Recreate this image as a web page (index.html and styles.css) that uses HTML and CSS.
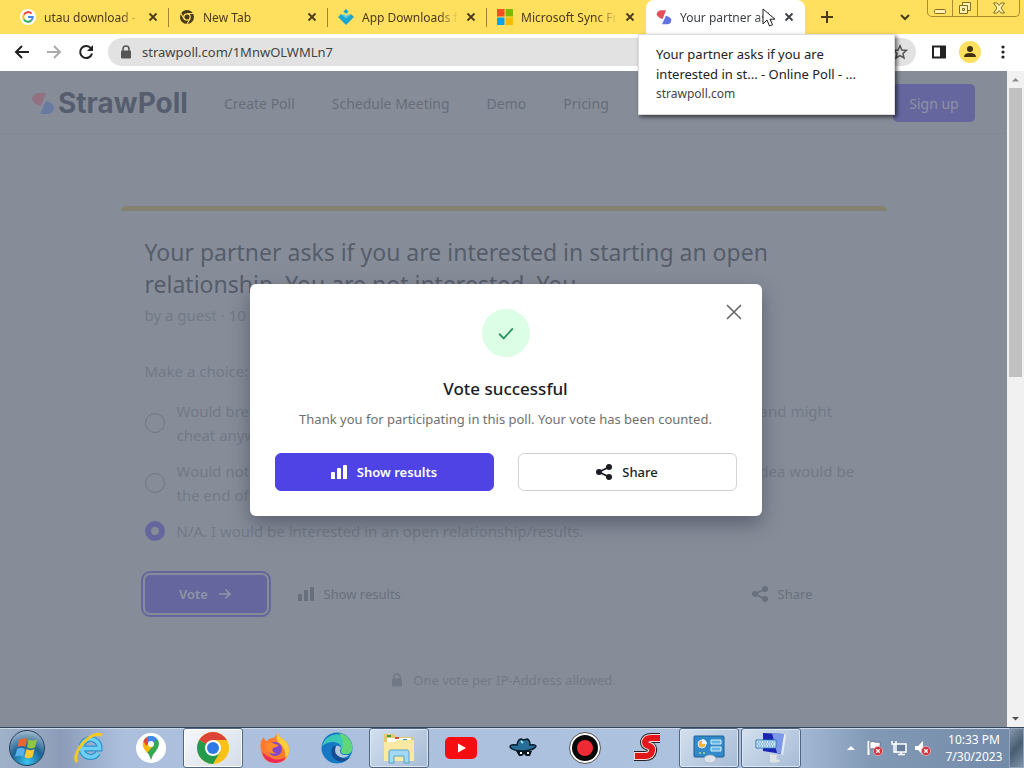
FILE: index.html
```
<!DOCTYPE html>
<html lang="en">
<head>
    <meta charset="UTF-8">
    <meta name="viewport" content="width=device-width, initial-scale=1.0">
    <title>Your partner asks if you are interested in st... - Online Poll - StrawPoll</title>
    <link rel="stylesheet" href="styles.css">
</head>

<body>
    <!-- shared icons -->
    <svg class="sprite" aria-hidden="true">
        <symbol id="x" viewBox="0 0 10 10"><path d="M1.5 1.5l7 7M8.500 1.500l-7 7" stroke="currentColor" stroke-width="1.8"/></symbol>
        <symbol id="bars" viewBox="0 0 16 16"><path d="M0 9q0-1 1-1h2q1 0 1 1v6H0zM6 5q0-1 1-1h2q1 0 1 1v10H6zM12 2q0-1 1-1h2q1 0 1 1v13h-4z" fill="currentColor"/></symbol>
        <symbol id="share" viewBox="0 0 16 16"><path d="M13 3L3 8l10 5" fill="none" stroke="currentColor" stroke-width="1.8"/><circle cx="13" cy="3" r="3" fill="currentColor"/><circle cx="3" cy="8" r="3" fill="currentColor"/><circle cx="13" cy="13" r="3" fill="currentColor"/></symbol>
        <symbol id="lock" viewBox="0 0 12 14"><path d="M3 7V4a3 3 0 0 1 6 0v3" fill="none" stroke="currentColor" stroke-width="1.6"/><rect x="1" y="5.500" width="10" height="8" rx="1.200" fill="currentColor"/></symbol>
        <symbol id="straws" viewBox="0 0 24 24"><path class="straw-red" d="M1 8q1-5 6-6h8l-5 13Q2 13 1 8z"/><path class="straw-blue" d="M9 23l6-13q7 2 8 6 0 6-6 7z"/></symbol>
        <symbol id="error" viewBox="0 0 10 10"><circle cx="5" cy="5" r="4.600" fill="#d0343c" stroke="#efb4b6" stroke-width=".8"/><path d="M3.200 3.200l3.600 3.600M6.800 3.200L3.200 6.800" stroke="#fff" stroke-width="1.300"/></symbol>
    </svg>

    <div class="tab-strip">
        <div class="tab">
            <svg class="favicon" viewBox="0 0 16 16"><circle cx="8" cy="8" r="8" fill="#fff"/><g fill="none" stroke-width="2"><path d="M4 5.500A4.700 4.700 0 0 1 11.500 4.600" stroke="#ea4335"/><path d="M4 5.500a4.700 4.700 0 0 0 0 5" stroke="#fbbc05"/><path d="M4 10.500a4.700 4.700 0 0 0 7.200 1" stroke="#34a853"/><path d="M8 8h4.700q0 2.200-1.500 3.500" stroke="#4285f4"/></g></svg>
            <span class="tab-title">utau download - Google Search</span>
            <button class="tab-close" aria-label="Close tab"><svg><use href="#x"/></svg></button>
        </div>
        <div class="tab">
            <svg class="favicon" viewBox="0 0 16 16"><circle cx="8" cy="8" r="7" fill="#4a3a1c"/><circle cx="8" cy="8" r="3.200" fill="#4a3a1c" stroke="#ffdf5e" stroke-width="1.300"/><path d="M8 4.500h6.500M5 9.800L1.800 4.200M11 9.800l-3.200 5.400" stroke="#ffdf5e" stroke-width="1.100"/></svg>
            <span class="tab-title">New Tab</span>
            <button class="tab-close" aria-label="Close tab"><svg><use href="#x"/></svg></button>
        </div>
        <div class="tab">
            <svg class="favicon" viewBox="0 0 16 16"><path d="M0 8l3-3 5 4 5-4 3 3-8 8z" fill="#1ba6cf"/><path d="M8 0l2.500 2.500L8 5 5.500 2.500z" fill="#1ba6cf"/><path d="M4 6l4 3.500L12 6l-2-1-2 2-2-2z" fill="#5cc9e2"/></svg>
            <span class="tab-title">App Downloads for Windows</span>
            <button class="tab-close" aria-label="Close tab"><svg><use href="#x"/></svg></button>
        </div>
        <div class="tab">
            <svg class="favicon" viewBox="0 0 16 16"><path d="M0 0h7.500v7.500H0z" fill="#f25022"/><path d="M8.500 0H16v7.500H8.500z" fill="#7fba00"/><path d="M0 8.500h7.500V16H0z" fill="#00a4ef"/><path d="M8.500 8.500H16V16H8.500z" fill="#ffb900"/></svg>
            <span class="tab-title">Microsoft Sync Framework</span>
            <button class="tab-close" aria-label="Close tab"><svg><use href="#x"/></svg></button>
        </div>
        <div class="tab active">
            <svg class="favicon"><use href="#straws"/></svg>
            <span class="tab-title">Your partner asks if you</span>
            <button class="tab-close" aria-label="Close tab"><svg><use href="#x"/></svg></button>
            <svg class="cursor" viewBox="0 0 14 20"><path d="M1 1v15l4-4 2.500 6 3-1.200L8 11.200h5z" fill="#fff" stroke="#222"/></svg>
            <div class="tab-card">
                <p>Your partner asks if you are<br>interested in st... - Online Poll - ...</p>
                <p class="host">strawpoll.com</p>
            </div>
        </div>
        <button class="new-tab" aria-label="New tab"><svg viewBox="0 0 12 12"><path d="M6 0v12M0 6h12" stroke="currentColor" stroke-width="2"/></svg></button>
        <button class="tab-search" aria-label="Search tabs"><svg viewBox="0 0 12 12"><path d="M2 4l4 4 4-4" fill="none" stroke="currentColor" stroke-width="2"/></svg></button>
        <div class="window-buttons">
            <button aria-label="Minimize"><svg viewBox="0 0 14 14"><rect x="1.500" y="8.500" width="11" height="4" rx="1" fill="#fff1b0" stroke="#8a6d1c"/></svg></button>
            <button aria-label="Restore"><svg viewBox="0 0 14 14"><path d="M4.500 1.500h8v8h-8z" fill="#fff1b0" stroke="#8a6d1c"/><path d="M1.500 4.500h8v8h-8z" fill="#fff1b0" stroke="#8a6d1c"/><path d="M4.500 7.500h2v2h-2z" fill="none" stroke="#8a6d1c"/></svg></button>
            <button class="wide" aria-label="Close"><svg viewBox="0 0 14 14"><path d="M1.500 2h3.500l2 2.500L9 2h3.500L9 7l3.500 5H9L7 9.500 5 12H1.500L5 7z" fill="#fff1b0" stroke="#8a6d1c"/></svg></button>
        </div>
    </div>

    <div class="toolbar">
        <button aria-label="Back"><svg viewBox="0 0 16 16"><path d="M15 8H2M8 2L2 8l6 6" fill="none" stroke="currentColor" stroke-width="2"/></svg></button>
        <button class="off" aria-label="Forward"><svg viewBox="0 0 16 16"><path d="M1 8h13M8 2l6 6-6 6" fill="none" stroke="currentColor" stroke-width="2"/></svg></button>
        <button aria-label="Reload"><svg viewBox="0 0 16 16"><path d="M13 4.500A6 6 0 1 0 14 9.500" fill="none" stroke="currentColor" stroke-width="2"/><path d="M15 1v6H9z" fill="currentColor"/></svg></button>
        <div class="omnibox">
            <svg class="lock"><use href="#lock"/></svg>
            <input type="text" aria-label="Address" value="strawpoll.com/1MnwOLWMLn7">
            <svg class="star" viewBox="0 0 16 16"><path d="M8 1.800l1.900 4.200 4.500.4-3.400 3 1 4.500L8 11.500l-4 2.400 1-4.500-3.400-3 4.500-.4z" fill="none" stroke="currentColor" stroke-width="1.500"/></svg>
        </div>
        <button aria-label="Side panel"><svg viewBox="0 0 16 16"><path d="M2 2.500h12v11H2z" fill="none" stroke="currentColor" stroke-width="2"/><path d="M9 2h5v12H9z" fill="currentColor"/></svg></button>
        <button class="avatar" aria-label="Profile"><svg viewBox="0 0 16 16"><circle cx="8" cy="5" r="3" fill="currentColor"/><path d="M2 13q0-4 6-4t6 4z" fill="currentColor"/></svg></button>
        <button aria-label="Menu"><svg viewBox="0 0 16 16"><g fill="currentColor"><circle cx="8" cy="3" r="1.600"/><circle cx="8" cy="8" r="1.600"/><circle cx="8" cy="13" r="1.600"/></g></svg></button>
    </div>

    <div class="viewport">
        <div class="page">
            <header class="site-header">
                <a href="#" class="logo"><svg><use href="#straws"/></svg>StrawPoll</a>
                <nav>
                    <a href="#">Create Poll</a>
                    <a href="#">Schedule Meeting</a>
                    <a href="#">Demo</a>
                    <a href="#">Pricing</a>
                </nav>
                <button class="sign-up">Sign up</button>
            </header>

            <main class="poll">
                <h1>Your partner asks if you are interested in starting an open relationship. You are not interested. You</h1>
                <p class="byline">by a guest &middot; 10 months ago</p>
                <form>
                    <p class="hint">Make a choice:</p>
                    <label><input type="radio" name="choice"><span>Would break up with them since they are clearly not happy in our relationship now and might<br>cheat anyway.</span></label>
                    <label><input type="radio" name="choice"><span>Would not break up with them but I would warn them that I am not for it and that idea would be<br>the end of us.</span></label>
                    <label><input type="radio" name="choice" checked><span>N/A. I would be interested in an open relationship/results.</span></label>
                    <div class="poll-actions">
                        <button type="button" class="vote">Vote <svg viewBox="0 0 14 14"><path d="M1 7h11M7.500 2.500L12 7l-4.500 4.500" fill="none" stroke="currentColor" stroke-width="1.600"/></svg></button>
                        <button type="button" class="plain"><svg><use href="#bars"/></svg>Show results</button>
                        <button type="button" class="plain last"><svg><use href="#share"/></svg>Share</button>
                    </div>
                </form>
            </main>
            <p class="ip-note"><svg><use href="#lock"/></svg>One vote per IP-Address allowed.</p>

            <div class="modal-wrap">
                <div class="modal" role="dialog" aria-labelledby="modal-title">
                    <button class="modal-close" aria-label="Close"><svg viewBox="0 0 16 16"><path d="M1 1l14 14M15 1L1 15" stroke="currentColor" stroke-width="1.600"/></svg></button>
                    <div class="check"><svg viewBox="0 0 24 24"><path d="M4.500 12.800l5 5L19.500 7" fill="none" stroke="#2a9461" stroke-width="2"/></svg></div>
                    <h2 id="modal-title">Vote successful</h2>
                    <p>Thank you for participating in this poll. Your vote has been counted.</p>
                    <div class="modal-actions">
                        <button class="primary"><svg><use href="#bars"/></svg>Show results</button>
                        <button><svg><use href="#share"/></svg>Share</button>
                    </div>
                </div>
            </div>
        </div>
        <div class="scrollbar">
            <svg viewBox="0 0 17 17"><path d="M5 10.500h7L8.500 7z" fill="#8b8b8b"/></svg>
            <div class="thumb"></div>
            <svg viewBox="0 0 17 17"><path d="M5 7h7l-3.500 3.500z" fill="#505050"/></svg>
        </div>
    </div>

    <div class="taskbar">
        <button class="start" aria-label="Start">
            <svg viewBox="0 0 38 38"><defs><radialGradient id="orb" cx=".5" cy=".9" r=".9"><stop offset="0" stop-color="#38c5ee"/><stop offset=".5" stop-color="#1c6296"/><stop offset="1" stop-color="#a7bccd"/></radialGradient></defs><circle cx="19" cy="19" r="17.500" fill="url(#orb)" stroke="#263f5a"/><path d="M11 11q4-3 8-1l-1.500 8q-4-2-8 0z" fill="#ee6430"/><path d="M20.500 10.500q4 2 8.500 0l-2 8q-4 2-8 0z" fill="#93c540"/><path d="M9 20q4-2.500 8 0l-2 8q-3.500-2.500-8 0z" fill="#58b0ea"/><path d="M18.500 20q4 2.500 8 0l-2 8q-4 2.500-8 0z" fill="#fbca36"/></svg>
        </button>
        <button class="task" aria-label="Internet Explorer">
            <svg viewBox="0 0 32 32"><path d="M25 21a9 9 0 1 1 1.500-4.500H9.500" fill="none" stroke="#2c94cf" stroke-width="6"/><path d="M25 21a9 9 0 1 1 1.500-4.500H9.500" fill="none" stroke="#6ed0f4" stroke-width="3.600"/><path d="M4 30C-2 22 16-2 29 3" fill="none" stroke="#f2c928" stroke-width="3"/></svg>
        </button>
        <button class="task" aria-label="Maps">
            <svg viewBox="0 0 32 32"><circle cx="16" cy="16" r="15" fill="#fff"/><path d="M16 28q-1-5-5-9-3-4-3-7a8 8 0 0 1 16 0q0 3-3 7-4 4-5 9z" fill="#34a853"/><path d="M10 18q-3-4-2-8l5-1 5 5-6 7z" fill="#fbbc04"/><path d="M8.500 9A8 8 0 0 1 13 4.600L15 10l-4 4z" fill="#ea4335"/><path d="M12 5a8 8 0 0 1 10 2l-6 7-4-3z" fill="#4285f4"/><circle cx="16" cy="12" r="3" fill="#fff"/></svg>
        </button>
        <button class="task open front" aria-label="Chrome">
            <svg viewBox="0 0 32 32"><circle cx="16" cy="16" r="16" fill="#fbc116"/><path d="M16 16L2.200 8A16 16 0 0 1 29.800 8z" fill="#dc4437"/><path d="M2.200 8A16 16 0 0 0 16 32l7-12-7-4z" fill="#249a4c"/><path d="M16 8h13.800L23 20z" fill="#fbc116"/><circle cx="16" cy="16" r="8" fill="#fff"/><circle cx="16" cy="16" r="6" fill="#2f78e6"/></svg>
        </button>
        <button class="task" aria-label="Firefox">
            <svg viewBox="0 0 32 32"><path d="M2 18Q0 9 5 5q0 3 3 4 2-3 6-3 3-1 5-5 1 4 5 6 7 5 6 13-2 11-14 11T2 18z" fill="#fd7a2e"/><path d="M19 1q1 4 5 6 7 5 6 13-1 5-4 8 2-12-7-18-3-4 0-9z" fill="#ffcf3a"/><path d="M3 20q3 11 13 11 8 0 12-7-6 5-13 3T3 20z" fill="#ee295c"/><circle cx="16" cy="17" r="7" fill="#8247cf"/><path d="M7 12q4-3 9 0l4 1q-3 3-6 3-2 4 3 5-7 2-9-4z" fill="#ff8a2a"/></svg>
        </button>
        <button class="task" aria-label="Edge">
            <svg viewBox="0 0 32 32"><circle cx="16" cy="16" r="15.500" fill="#1678c5"/><path d="M1 14A15.500 15.500 0 0 1 31.500 17q-1 6-7 5-6 0-4-5 0-6-8-7-7 0-11 4z" fill="#3bc7b8"/><path d="M18 1q11 2 13.500 13 0 9-8 8-5-1-3-4 4-9-2.500-17z" fill="#62d777"/><path d="M12 14q-5 10 5 15 7 2 12-4-5 3-9 0-8-3-5-11z" fill="#144d91"/><path d="M15 14q-3 8 4 11 5 2 9-2-12 1-8-7-2-3-5-2z" fill="#b4c8e0"/></svg>
        </button>
        <button class="task open" aria-label="Explorer">
            <svg viewBox="0 0 32 32"><path d="M1 2h10l2 3h17v24H1z" fill="#e5c96a"/><path d="M4 6h24v6H4z" fill="#fff"/><path d="M4 3h4v2H4z" fill="#3c9a54"/><path d="M12 5h4v2h-4z" fill="#d05237"/><path d="M20 7h4v2h-4z" fill="#3285c9"/><path d="M1 10h11l2-2h17v21H1z" fill="#f9e9a2"/><path d="M6 31V20q0-2 2-2h16q2 0 2 2v11h-5v-7H11v7z" fill="#a3d9f2" stroke="#53a3cc"/></svg>
        </button>
        <button class="task" aria-label="YouTube">
            <svg viewBox="0 0 32 32"><rect y="5" width="32" height="22" rx="5" fill="#f60d12"/><path d="M13 11.500l8 4.500-8 4.500z" fill="#fff"/></svg>
        </button>
        <button class="task" aria-label="Incognito">
            <svg viewBox="0 0 32 32"><path d="M10 13q1-6 4-6l3 1 3-1q3 1 3 6 5-1 6 1-1 4-12 5-12 0-14-4 0-3 7-2z" fill="#256e97" stroke="#0a1c29" stroke-width="1.500"/><path d="M9 19h16l-2 5h-4l-2-2-2 2h-3z" fill="#0b1720"/><path d="M13 20h2v2h-2zM20 20h2v2h-2z" fill="#fff"/><path d="M14 9l2 2" stroke="#9ddcf2" stroke-width="2"/></svg>
        </button>
        <button class="task" aria-label="Recorder">
            <svg viewBox="0 0 32 32"><circle cx="16" cy="16" r="15.500" fill="#fff" stroke="#555"/><circle cx="16" cy="16" r="13" fill="#070707"/><circle cx="16" cy="16" r="8" fill="#ee2b35"/></svg>
        </button>
        <button class="task" aria-label="S">
            <svg viewBox="0 0 32 32"><g fill="none" stroke-linejoin="round"><path d="M29 6H20q-5 0-6 4 0 3 4 4 4 1 3 5-1 5-7 5H3" stroke="#222" stroke-width="10"/><path d="M29 6H20q-5 0-6 4 0 3 4 4 4 1 3 5-1 5-7 5H3" stroke="#f3d9d9" stroke-width="8"/><path d="M29 6H20q-5 0-6 4 0 3 4 4 4 1 3 5-1 5-7 5H4" stroke="#e3161b" stroke-width="6"/></g></svg>
        </button>
        <button class="task open" aria-label="Control Panel">
            <svg viewBox="0 0 32 32"><rect x="1" y="4" width="30" height="21" rx="1" fill="#3289c9" stroke="#1d5e96"/><circle cx="9" cy="12" r="4" fill="#f2b73b" stroke="#cfe9f8"/><path d="M9 12V7a5 5 0 0 1 5 5z" fill="#e9f6fc"/><path d="M18 8h10v4H18zM18 15h10v4H18z" fill="#65b5e3" stroke="#d8effb"/><circle cx="7" cy="21" r="1" fill="#a8dd7c"/><circle cx="11" cy="21" r="1" fill="#a8dd7c"/><ellipse cx="17" cy="27" rx="6" ry="4" fill="#dce2e7" stroke="#9ba7b0" stroke-width=".6"/></svg>
        </button>
        <button class="task open" aria-label="Keyboard">
            <svg viewBox="0 0 32 32"><path d="M8 1l21 1-2 20-19-3z" fill="#1a25b2"/><path d="M17 1l12 1-2 20-5-1z" fill="#7d98ea"/><path d="M29 2l2 1-3 20-2-1z" fill="#e6ebf0"/><path d="M15 22l7 1-1 4 5 2q-5 3-11 1z" fill="#dfe2e3"/><path d="M1 8h20v8H1z" fill="#e4f4ff" stroke="#2675b7"/><path d="M3 10h17M2 12h17M3 14h17" stroke="#2675b7" stroke-dasharray="1.500 1"/></svg>
        </button>
        <div class="tray">
            <svg viewBox="0 0 16 16"><path d="M4 10h8L8 6z" fill="#fff"/></svg>
            <svg viewBox="0 0 16 16"><path d="M1.500 1v14" stroke="#fff" stroke-width="2"/><path d="M3 2q3-1 5 0t5 0v7q-2 1-4 0T3 9z" fill="#fff" stroke="#44566c" stroke-width=".6"/><use href="#error" x="6" y="6" width="10" height="10"/></svg>
            <svg viewBox="0 0 16 16"><path d="M5 4h10v8H5zM10 12v2M7 14.500h7" fill="#677f9c" stroke="#fff" stroke-width="1.500"/><path d="M1 1v3h4V1M3 4v8h3" fill="none" stroke="#fff" stroke-width="1.500"/></svg>
            <svg viewBox="0 0 16 16"><path d="M0 6h3l5-5v14l-5-5H0z" fill="#fff"/><use href="#error" x="6" y="6" width="10" height="10"/></svg>
        </div>
        <div class="clock">10:33 PM<br>7/30/2023</div>
        <button class="show-desktop" aria-label="Show desktop"></button>
    </div>
</body>
</html>
```
FILE: styles.css
```
:root {
    --straw-red: #e2515b;
    --straw-blue: #6274e2;
}

* {
    box-sizing: border-box;
}

body {
    margin: 0;
    height: 100vh;
    display: flex;
    flex-direction: column;
    overflow: hidden;
    font-family: "Noto Sans", "Open Sans", sans-serif;
    font-size: 13px;
    color: #222;
}

p, h1, h2 {
    margin: 0;
}

a {
    color: inherit;
    text-decoration: none;
}

button {
    display: flex;
    align-items: center;
    justify-content: center;
    padding: 0;
    border: 0;
    background: none;
    color: inherit;
    font: inherit;
}

svg {
    display: block;
    flex-shrink: 0;
    width: 16px;
    height: 16px;
}

.sprite {
    position: absolute;
    width: 0;
    height: 0;
}

.straw-red {
    fill: var(--straw-red);
}

.straw-blue {
    fill: var(--straw-blue);
}

/* browser tabs */
.tab-strip {
    display: flex;
    align-items: center;
    height: 34px;
    padding-left: 10px;
    background-color: #ffdf5e;
    color: #4a3a1c;
    font-size: 12px;
}

.tab {
    display: flex;
    align-items: center;
    gap: 8px;
    flex: 0 1 159px;
    min-width: 0;
    height: 34px;
    padding: 0 11px 0 10px;
    position: relative;
}

.tab:not(.active)::after {
    content: "";
    position: absolute;
    right: 0;
    top: 8px;
    width: 1px;
    height: 19px;
    background-color: #9c8437;
}

.tab:has(+ .active)::after {
    display: none;
}

.tab-title {
    flex: 1;
    min-width: 0;
    overflow: hidden;
    white-space: nowrap;
    mask-image: linear-gradient(to right, #000 80%, transparent);
}

.tab-close svg {
    width: 10px;
    height: 10px;
}

.tab.active {
    background-color: #fff;
    border-radius: 8px 8px 0 0;
    color: #3c4043;
}

.cursor {
    position: absolute;
    left: 116px;
    top: 8px;
    width: 14px;
    height: 20px;
    z-index: 3;
}

.tab-card {
    position: absolute;
    left: -8px;
    top: 34px;
    z-index: 2;
    width: 257px;
    padding: 9px 17px 10px;
    background-color: #fff;
    border: 1px solid #ddd;
    box-shadow: 2px 2px 4px rgba(0, 0, 0, 0.6);
    color: #222;
    font-size: 13px;
    line-height: 20px;
    white-space: nowrap;
}

.tab-card .host {
    color: #444;
    font-size: 12px;
}

.new-tab {
    width: 44px;
    height: 34px;
}

.new-tab svg,
.tab-search svg {
    width: 12px;
    height: 12px;
}

.tab-search {
    margin-left: auto;
    margin-right: 16px;
}

.window-buttons {
    display: flex;
    align-self: flex-start;
    margin-right: 4px;
    border: 1px solid #a88a30;
    border-top: 0;
    border-radius: 0 0 5px 5px;
}

.window-buttons button {
    width: 25px;
    height: 16px;
    border-right: 1px solid #a88a30;
}

.window-buttons .wide {
    width: 41px;
    border-right: 0;
}

.window-buttons svg {
    width: 14px;
    height: 14px;
}

.toolbar {
    display: flex;
    align-items: center;
    gap: 8px;
    height: 37px;
    padding: 0 9px 2px 10px;
    background-color: #fff;
}

.toolbar button {
    width: 24px;
    height: 24px;
}

.toolbar .off {
    color: #aaa;
}

.toolbar .avatar {
    border-radius: 50%;
    background-color: #ffdf5e;
    color: #3f3110;
    width: 22px;
    height: 22px;
    margin-right: 2px;
}

.omnibox {
    display: flex;
    align-items: center;
    gap: 10px;
    flex: 1;
    height: 28px;
    margin: 0 3px 0 2px;
    padding: 0 8px 0 12px;
    border-radius: 14px;
    background-color: #e2e2e2;
    color: #555;
}

.omnibox .lock {
    width: 12px;
    height: 14px;
}

.omnibox input {
    flex: 1;
    min-width: 0;
    padding: 0;
    border: 0;
    background: none;
    color: #444;
    font: inherit;
    font-size: 13px;
}

/* page, dimmed behind the dialog */
.viewport {
    display: flex;
    flex: 1;
    min-height: 0;
}

.page {
    --straw-red: #91717f;
    --straw-blue: #687aa0;
    flex: 1;
    position: relative;
    overflow: hidden;
    background-color: #868d99;
    color: #727986;
    font-size: 15px;
}

.site-header {
    display: flex;
    align-items: center;
    height: 63px;
    padding: 2px 32px 0 31px;
    border-bottom: 1px solid #828995;
    font-size: 14px;
}

.logo {
    display: flex;
    align-items: center;
    gap: 3px;
    color: #565d6e;
    font-family: Inter, sans-serif;
    font-size: 28px;
    font-weight: 700;
}

.logo svg {
    width: 24px;
    height: 24px;
}

.site-header nav {
    display: flex;
    gap: 37px;
    margin-left: 36px;
    color: #666d7a;
}

.sign-up {
    width: 82px;
    height: 38px;
    margin-left: auto;
    border-radius: 5px;
    background-color: #65669d;
    color: #8c93a5;
}

.poll {
    max-width: 766px;
    margin: 72px auto 0;
    padding: 25px 22px 24px 24px;
    border-top: 5px solid #84826f;
    border-radius: 5px;
}

.poll h1 {
    color: #565d6a;
    font-size: 23px;
    font-weight: 400;
    line-height: 32px;
}

.byline {
    line-height: 30px;
}

.hint {
    margin-top: 29px;
    margin-bottom: 16px;
    line-height: 24px;
}

.poll label {
    display: flex;
    align-items: center;
    gap: 12px;
    margin-bottom: 12px;
    line-height: 24px;
    white-space: nowrap;
}

.poll input {
    appearance: none;
    flex-shrink: 0;
    width: 20px;
    height: 20px;
    margin: 0;
    border: 1px solid #707784;
    border-radius: 50%;
}

.poll input:checked {
    border: 6px solid #65669d;
}

.poll-actions {
    display: flex;
    align-items: center;
    margin-top: 32px;
    font-size: 13px;
}

.vote {
    gap: 10px;
    width: 122px;
    height: 38px;
    margin-right: 31px;
    border-radius: 5px;
    outline: 2px solid #65669d;
    outline-offset: 2px;
    background-color: #65669d;
    color: #8e95a8;
    font-weight: 600;
}

.vote svg {
    width: 14px;
    height: 14px;
}

.plain {
    gap: 10px;
    color: #69707d;
}

.last {
    margin-left: auto;
    margin-right: 52px;
}

.ip-note {
    display: flex;
    align-items: center;
    justify-content: center;
    gap: 10px;
    margin-top: 34px;
    font-size: 13px;
}

.ip-note svg {
    width: 12px;
    height: 14px;
}

.modal-wrap {
    position: absolute;
    inset: 0;
    display: flex;
    align-items: center;
    justify-content: center;
    padding: 2px 0 0 4px;
}

.modal {
    position: relative;
    width: 512px;
    max-width: 100%;
    padding: 25px;
    border-radius: 6px;
    background-color: #fff;
    box-shadow: 0 8px 20px rgba(40, 45, 60, 0.45);
    color: #1b1b24;
    text-align: center;
}

.modal-close {
    position: absolute;
    top: 20px;
    right: 20px;
    color: #666;
}

.check {
    display: flex;
    align-items: center;
    justify-content: center;
    width: 48px;
    height: 48px;
    margin: 0 auto 20px;
    border-radius: 50%;
    background-color: #dcfde6;
}

.check svg {
    width: 22px;
    height: 22px;
}

.modal h2 {
    font-size: 17px;
    font-weight: 500;
    line-height: 24px;
}

.modal p {
    margin: 8px 0 24px;
    color: #707070;
    font-size: 13px;
    line-height: 20px;
}

.modal-actions {
    display: grid;
    grid-template-columns: 1fr 1fr;
    gap: 24px;
}

.modal-actions button {
    gap: 10px;
    height: 38px;
    border: 1px solid #d2d3d8;
    border-radius: 6px;
    font-size: 13px;
    font-weight: 500;
}

.modal-actions .primary {
    border-color: #4f43e5;
    background-color: #4f43e5;
    color: #fff;
    font-weight: 600;
}

.scrollbar {
    display: flex;
    flex-direction: column;
    width: 17px;
    background-color: #f1f1f1;
}

.scrollbar svg {
    width: 17px;
    height: 17px;
}

.scrollbar .thumb {
    width: 13px;
    height: 44%;
    margin: 0 2px auto;
    background-color: #c1c1c1;
}

/* windows taskbar */
.taskbar {
    display: flex;
    align-items: center;
    gap: 2px;
    height: 41px;
    border-top: 1px solid #35465c;
    background: linear-gradient(to right, #a0b2ca, #8c9cb8 6%, #acc0de 12%, #adc2de 76%, #8299b6 85%, #728aa7);
    box-shadow: inset 0 1px 0 #cbd8e8;
}

.start {
    width: 57px;
    height: 40px;
    padding-right: 3px;
}

.start svg {
    width: 38px;
    height: 38px;
}

.task {
    flex: 0 1 60px;
    height: 40px;
}

.task svg {
    width: 32px;
    height: 32px;
}

.open {
    border: 1px solid #526782;
    border-radius: 3px;
    background: linear-gradient(135deg, #d3e0ee, #a6bbd6);
    box-shadow: inset 0 0 0 1px #dce7f2;
}

.front {
    background: linear-gradient(135deg, #f6f8fb, #d4dde9);
    box-shadow: inset 0 0 0 1px #fff;
}

.tray {
    display: flex;
    gap: 8px;
    margin-left: auto;
}

.clock {
    width: 74px;
    padding-left: 8px;
    color: #fff;
    font-size: 12px;
    line-height: 17px;
    text-align: center;
}

.show-desktop {
    width: 15px;
    height: 40px;
    border: 1px solid #92a5bc;
    background: linear-gradient(135deg, #8396a9, #495d72 50%, #7d93aa);
}
```
